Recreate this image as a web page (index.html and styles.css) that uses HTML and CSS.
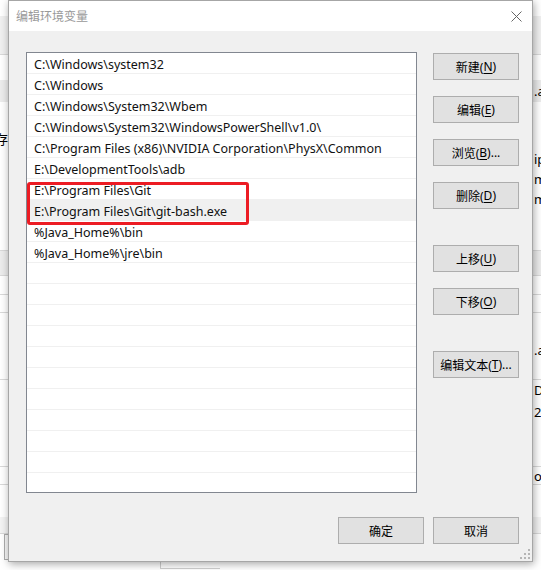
FILE: index.html
```html
<!DOCTYPE html>
<html lang="zh">
<head>
<meta charset="utf-8">
<title>编辑环境变量</title>
<link rel="stylesheet" href="styles.css">
</head>
<body>
<div class="parent">
  <div class="prow h16"></div>
  <div class="prow h39 gray line"></div>
  <div class="prow h25"></div>
  <div class="prow h22 band"><span class="rtext">.a</span></div>
  <div class="prow h26"></div>
  <div class="prow h20"><span class="ltext">存</span></div>
  <div class="prow h21"><span class="rtext">ip</span></div>
  <div class="prow h20"><span class="rtext">m</span></div>
  <div class="prow h20"><span class="rtext">m</span></div>
  <div class="prow h42 line"></div>
  <div class="prow h25 band line"></div>
  <div class="prow h19 line"></div>
  <div class="prow h18 line"></div>
  <div class="prow h27"></div>
  <div class="prow h20"><span class="rtext">.a</span></div>
  <div class="prow h20 line"></div>
  <div class="prow h20"><span class="rtext">D</span></div>
  <div class="prow h23"><span class="rtext">20</span></div>
  <div class="prow h44 line"></div>
  <div class="prow h18 line"><span class="rtext">ow</span></div>
  <div class="prow h32"></div>
  <div class="prow h17 band2 line"></div>
  <div class="pbuttons">
    <span class="pbtn">取消</span>
    <span class="pbtn disabled">应用</span>
    <span class="pbox"></span>
  </div>
</div>

<div class="dialog">
  <div class="titlebar">
    <span class="title">编辑环境变量</span>
    <svg class="close" width="11" height="11" viewBox="0 0 11 11"><path d="M0.5 0.5 L10.5 10.5 M10.5 0.5 L0.5 10.5" stroke="#666" stroke-width="1" fill="none"/></svg>
  </div>
  <div class="body">
    <div class="main">
      <div class="listbox">
        <div class="row">C:\Windows\system32</div>
        <div class="row">C:\Windows</div>
        <div class="row">C:\Windows\System32\Wbem</div>
        <div class="row">C:\Windows\System32\WindowsPowerShell\v1.0\</div>
        <div class="row">C:\Program Files (x86)\NVIDIA Corporation\PhysX\Common</div>
        <div class="row">E:\DevelopmentTools\adb</div>
        <div class="row">E:\Program Files\Git</div>
        <div class="row selected">E:\Program Files\Git\git-bash.exe</div>
        <div class="row">%Java_Home%\bin</div>
        <div class="row">%Java_Home%\jre\bin</div>
        <div class="row"></div>
        <div class="row"></div>
        <div class="row"></div>
        <div class="row"></div>
        <div class="row"></div>
        <div class="row"></div>
        <div class="row"></div>
        <div class="row"></div>
        <div class="row"></div>
        <div class="row"></div>
        <div class="row"></div>
      </div>
      <div class="side">
        <div class="btn">新建(<u>N</u>)</div>
        <div class="btn">编辑(<u>E</u>)</div>
        <div class="btn">浏览(<u>B</u>)...</div>
        <div class="btn">删除(<u>D</u>)</div>
        <div class="btn group">上移(<u>U</u>)</div>
        <div class="btn">下移(<u>O</u>)</div>
        <div class="btn group">编辑文本(<u>T</u>)...</div>
      </div>
    </div>
    <div class="footer">
      <div class="btn">确定</div>
      <div class="btn">取消</div>
    </div>
  </div>
  <div class="highlight"></div>
  <svg class="grip" width="10" height="10" viewBox="0 0 10 10">
    <rect x="8" y="0" width="2" height="2" fill="#b5b5b5"/>
    <rect x="4" y="4" width="2" height="2" fill="#b5b5b5"/>
    <rect x="8" y="4" width="2" height="2" fill="#b5b5b5"/>
    <rect x="0" y="8" width="2" height="2" fill="#b5b5b5"/>
    <rect x="4" y="8" width="2" height="2" fill="#b5b5b5"/>
    <rect x="8" y="8" width="2" height="2" fill="#b5b5b5"/>
  </svg>
</div>
</body>
</html>
```

FILE: styles.css
```css
* { box-sizing: border-box; }
html, body { margin: 0; padding: 0; }
body {
  width: 541px;
  height: 570px;
  overflow: hidden;
  position: relative;
  background: #ffffff;
  font-family: "Noto Sans", "Noto Sans CJK SC", sans-serif;
  font-size: 12px;
  color: #000;
}

/* background (parent) window */
.parent {
  width: 541px;
  height: 570px;
  display: flex;
  flex-direction: column;
  overflow: hidden;
}
.prow {
  flex: none;
  position: relative;
  display: flex;
  align-items: center;
  white-space: nowrap;
  overflow: hidden;
}
.h16 { height: 16px; }
.h17 { height: 17px; }
.h18 { height: 18px; }
.h19 { height: 19px; }
.h20 { height: 20px; }
.h21 { height: 21px; }
.h22 { height: 22px; }
.h23 { height: 23px; }
.h25 { height: 25px; }
.h26 { height: 26px; }
.h27 { height: 27px; }
.h32 { height: 32px; }
.h39 { height: 39px; }
.h42 { height: 42px; }
.h44 { height: 44px; }
.gray { background: #f0f0f0; }
.band { background: #ececec; }
.band2 { background: #f3f3f3; }
.line { border-bottom: 1px solid #d9d9d9; }
.rtext { padding-left: 534px; font-size: 13px; }
.ltext { margin-left: -5px; font-size: 13px; }
.pbuttons {
  flex: 1;
  display: flex;
  align-items: flex-start;
  padding: 0 0 0 4px;
  gap: 8px;
}
.pbtn {
  width: 86px;
  height: 26px;
  border: 1px solid #adadad;
  background: #f7f7f7;
  display: flex;
  justify-content: center;
  padding-top: 5px;
  font-size: 13px;
}
.pbtn.disabled { width: 54px; background: #cccccc; color: #8a8a8a; border-color: #bfbfbf; }
.pbox { width: 60px; height: 20px; margin-top: 15px; border: 1px solid #cfcfcf; border-right: none; }

/* dialog */
.dialog {
  position: absolute;
  left: 8px;
  top: 0;
  width: 525px;
  height: 562px;
  border: 1px solid #a6a6a6;
  background: #f0f0f0;
  box-shadow: 1px 2px 8px rgba(0, 0, 0, 0.35);
  display: flex;
  flex-direction: column;
}
.titlebar {
  height: 30px;
  flex: none;
  background: #ffffff;
  display: flex;
  align-items: center;
  justify-content: space-between;
  padding: 0 10px 0 7px;
}
.title { color: #999999; font-size: 12px; }
.close { display: block; }

.body {
  flex: 1;
  display: flex;
  flex-direction: column;
  padding: 21px 13px 0 17px;
}
.main {
  display: flex;
  gap: 16px;
}
.listbox {
  width: 391px;
  height: 441px;
  border: 1px solid #828790;
  background: #ffffff;
  overflow: hidden;
}
.row {
  height: 21px;
  border-bottom: 1px solid #f0f0f0;
  padding-left: 7px;
  display: flex;
  align-items: center;
  white-space: nowrap;
  font-size: 12.5px;
  line-height: 1;
  padding-top: 4px;
  color: #111;
}
.row.selected { background: #f0f0f0; }

.side {
  width: 86px;
  display: flex;
  flex-direction: column;
  gap: 16px;
  padding-top: 1px;
}
.btn {
  width: 86px;
  height: 27px;
  flex: none;
  border: 1px solid #adadad;
  background: #e1e1e1;
  display: flex;
  align-items: center;
  justify-content: center;
  font-size: 12px;
  white-space: nowrap;
}
.btn u { text-underline-offset: 2px; }
.btn.group { margin-top: 20px; }

.footer {
  display: flex;
  justify-content: flex-end;
  gap: 9px;
  margin-top: 24px;
}

.highlight {
  position: absolute;
  left: 18px;
  top: 181px;
  width: 222px;
  height: 43px;
  border: 3px solid #ec1c24;
  border-radius: 3px;
}
.grip {
  position: absolute;
  right: 2px;
  bottom: 2px;
}
```
